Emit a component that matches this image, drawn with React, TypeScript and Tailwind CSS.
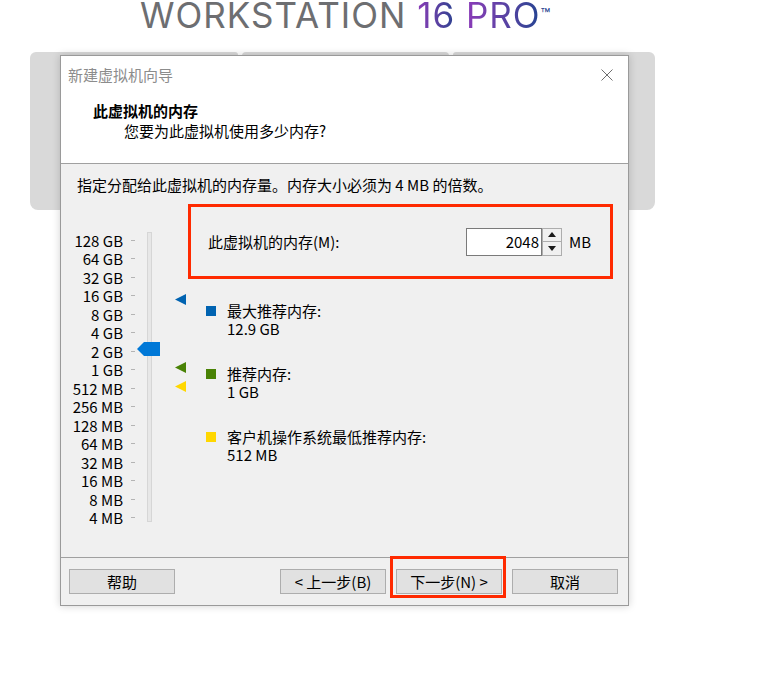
import React from "react";

const sizes = [
  "128 GB",
  "64 GB",
  "32 GB",
  "16 GB",
  "8 GB",
  "4 GB",
  "2 GB",
  "1 GB",
  "512 MB",
  "256 MB",
  "128 MB",
  "64 MB",
  "32 MB",
  "16 MB",
  "8 MB",
  "4 MB",
];

const Marker: React.FC<{ color: string; top: string }> = ({ color, top }) => (
  <svg
    className={`absolute left-0 ${top}`}
    width="11"
    height="11"
    viewBox="0 0 11 11"
  >
    <polygon points="0,5.5 11,0 11,11" fill={color} />
  </svg>
);

const Legend: React.FC<{ color: string; title: string; value: string }> = ({
  color,
  title,
  value,
}) => (
  <div className="flex">
    <span className={`ml-[18px] mt-[4px] h-[10px] w-[10px] ${color}`} />
    <div className="ml-[11px] leading-[18px]">
      <div>{title}</div>
      <div>{value}</div>
    </div>
  </div>
);

const Button: React.FC<{ label: string }> = ({ label }) => (
  <div className="flex h-[25px] w-[106px] items-center justify-center border border-[#adadad] bg-[#e1e1e1] leading-none">
    {label}
  </div>
);

const App: React.FC = () => {
  return (
    <div className="relative h-[695px] w-[761px] overflow-hidden bg-white font-['Noto_Sans_CJK_SC','Noto_Sans',sans-serif] text-[15px] text-black">
      {/* Product logo */}
      <div className="-mt-[5px] h-[40px] pl-[140px] font-['Inter',sans-serif] text-[35px] font-normal leading-[40px] tracking-[1px] text-[#6d6e71]">
        WORKSTATION{" "}
        <span className="bg-linear-to-r from-[#8b3ab8] to-[#27418f] bg-clip-text text-transparent">
          16
        </span>{" "}
        <span className="bg-linear-to-r from-[#8b3ab8] to-[#1f4391] bg-clip-text text-transparent">
          PRO
        </span>
        <sup className="text-[16px] text-[#27418f]">™</sup>
      </div>

      {/* Grey panel behind the wizard */}
      <div className="ml-[30px] mt-[17px] w-[625px]">
        <div className="flex h-[6px] gap-[4px]">
          <div className="w-[208px] rounded-tl-[8px] rounded-tr-[4px] bg-[#d9d9d9]" />
          <div className="w-[207px] rounded-t-[4px] bg-[#d9d9d9]" />
          <div className="flex-1 rounded-tl-[4px] rounded-tr-[8px] bg-[#d9d9d9]" />
        </div>
        <div className="h-[152px] rounded-b-[8px] bg-[#d9d9d9]" />
      </div>

      {/* Wizard dialog */}
      <div className="absolute left-[60px] top-[55px] flex h-[551px] w-[569px] flex-col border border-[#9a9a9a] bg-[#f0f0f0] shadow-[0_0_8px_rgba(0,0,0,0.18)]">
        {/* Title + header */}
        <div className="h-[108px] border-b border-[#a0a0a0] bg-white">
          <div className="flex h-[38px] items-center pl-[7px] pr-[15px] text-[#8c8c8c]">
            <span className="leading-[20px]">新建虚拟机向导</span>
            <svg className="ml-auto" width="12" height="12" viewBox="0 0 12 12">
              <path d="M0.5 0.5 L11.5 11.5 M11.5 0.5 L0.5 11.5" stroke="#6e6e6e" strokeWidth="1" />
            </svg>
          </div>
          <div className="mt-[7px] pl-[32px] font-bold leading-[20px]">此虚拟机的内存</div>
          <div className="pl-[63px] leading-[20px]">您要为此虚拟机使用多少内存?</div>
        </div>

        {/* Body */}
        <div className="flex-1 pt-[11px]">
          <div className="pl-[16px] leading-[20px]">
            指定分配给此虚拟机的内存量。内存大小必须为 4 MB 的倍数。
          </div>

          <div className="mt-[9px] flex items-start">
            {/* Scale labels */}
            <div className="mt-[27px] flex h-[296px] w-[62px] flex-col text-right">
              {sizes.map((s) => (
                <div key={s} className="flex flex-1 items-center justify-end leading-none">
                  {s}
                </div>
              ))}
            </div>
            {/* Ticks */}
            <div className="ml-[8px] mt-[27px] flex h-[296px] w-[4px] flex-col">
              {sizes.map((s) => (
                <div key={s} className="flex flex-1 items-center">
                  <span className="h-px w-[4px] bg-[#b4b4b4]" />
                </div>
              ))}
            </div>
            {/* Track */}
            <div className="relative ml-[12px] mt-[28px] h-[290px] w-[5px] border border-[#d6d6d6] bg-[#e7e7e7]">
              <svg
                className="absolute -left-[11px] top-[109px]"
                width="23"
                height="14"
                viewBox="0 0 23 14"
              >
                <polygon points="0,7 7,0 23,0 23,14 7,14" fill="#0078d7" />
              </svg>
            </div>
            {/* Recommendation markers */}
            <div className="relative ml-[23px] h-[300px] w-[11px]">
              <Marker color="#0063b1" top="top-[90px]" />
              <Marker color="#498205" top="top-[158px]" />
              <Marker color="#ffd700" top="top-[177px]" />
            </div>

            {/* Right column */}
            <div className="ml-[2px] flex flex-col">
              <div className="flex h-[75px] w-[425px] items-center border-[3px] border-[#ff2a00] pl-[17px]">
                <span className="w-[258px] leading-[20px]">此虚拟机的内存(M):</span>
                <div className="flex h-[28px] w-[76px] items-center justify-end border border-[#7a7a7a] bg-white pr-[2px] leading-none">
                  2048
                </div>
                <div className="flex h-[28px] w-[20px] flex-col">
                  <div className="flex h-[14px] items-center justify-center border border-[#adadad] bg-[#f0f0f0]">
                    <svg width="8" height="5" viewBox="0 0 8 5">
                      <polygon points="4,0 8,5 0,5" fill="#1a1a1a" />
                    </svg>
                  </div>
                  <div className="flex h-[14px] items-center justify-center border border-t-0 border-[#adadad] bg-[#f0f0f0]">
                    <svg width="8" height="5" viewBox="0 0 8 5">
                      <polygon points="0,0 8,0 4,5" fill="#1a1a1a" />
                    </svg>
                  </div>
                </div>
                <span className="ml-[7px] leading-none">MB</span>
              </div>

              <div className="mt-[23px] flex flex-col gap-[27px]">
                <Legend color="bg-[#0063b1]" title="最大推荐内存:" value="12.9 GB" />
                <Legend color="bg-[#498205]" title="推荐内存:" value="1 GB" />
                <Legend color="bg-[#ffd700]" title="客户机操作系统最低推荐内存:" value="512 MB" />
              </div>
            </div>
          </div>
        </div>

        {/* Footer buttons */}
        <div className="flex h-[48px] items-start border-t border-[#a0a0a0] pl-[8px] pr-[10px] pt-[11px]">
          <Button label="帮助" />
          <div className="ml-auto flex gap-[10px]">
            <Button label="< 上一步(B)" />
            <div className="relative">
              <Button label="下一步(N) >" />
              <div className="absolute -bottom-[4px] -left-[6px] -right-[4px] -top-[13px] border-[3px] border-[#ff2a00]" />
            </div>
            <Button label="取消" />
          </div>
        </div>
      </div>
    </div>
  );
};

export default App;
